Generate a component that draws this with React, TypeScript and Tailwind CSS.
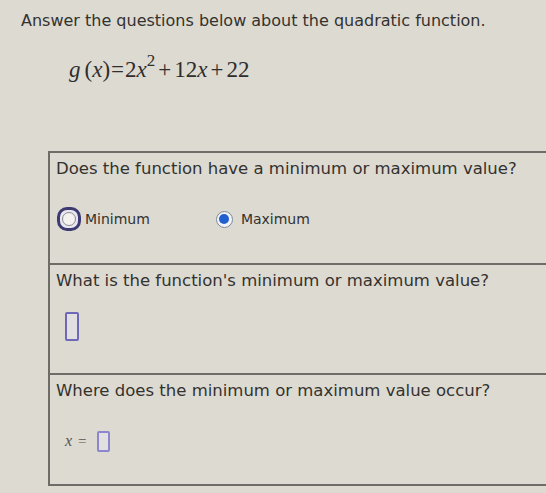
import React from "react";

const sans = { fontFamily: '"DejaVu Sans", Verdana, sans-serif' };
const serif = { fontFamily: '"Liberation Serif", "Times New Roman", serif' };

export default function App() {
  return (
    <div
      className="relative w-[546px] h-[493px] overflow-hidden bg-[#dddad2] text-[#33322f]"
      style={sans}
    >
      <div className="pl-[21px] pt-[10px] text-[16px] leading-[22px]">
        Answer the questions below about the quadratic function.
      </div>
      <div className="pl-[69px] pt-[25px] text-[23px] leading-[26px] text-[#2f2e2c]" style={serif}>
        <i>g</i>
        <span className="ml-[4px]">(</span>
        <i>x</i>
        <span>)</span>
        <span className="mx-[1px]">=</span>
        <span>2</span>
        <i>x</i>
        <span className="relative -top-[11px] text-[17px]">2</span>
        <span className="mx-[3px]">+</span>
        <span>12</span>
        <i>x</i>
        <span className="mx-[3px]">+</span>
        <span>22</span>
      </div>

      <div className="ml-[48px] mt-[66px] w-[520px] border-2 border-[#6f6c67]">
        <div className="h-[110px] pl-[6px] pt-[5px]">
          <div className="text-[16.5px] leading-[22px]">
            Does the function have a minimum or maximum value?
          </div>
          <div className="mt-[27px] flex items-center">
            <span className="ml-[1px] flex h-[24px] w-[24px] items-center justify-center rounded-[10px] border-[3px] border-[#3c3a70] bg-[#e9e6ef]">
              <span className="h-[14px] w-[14px] rounded-full border border-[#8b8a90] bg-[#f4f3f0]" />
            </span>
            <span className="ml-[4px] text-[14px]">Minimum</span>
            <span className="ml-[66px] flex h-[17px] w-[17px] items-center justify-center rounded-full border border-[#7a8aa0] bg-[#f2f2f2]">
              <span className="h-[10px] w-[10px] rounded-full bg-[#1f5fd0]" />
            </span>
            <span className="ml-[8px] text-[14px]">Maximum</span>
          </div>
        </div>
        <div className="h-[110px] border-t-2 border-[#6f6c67] pl-[6px] pt-[5px]">
          <div className="text-[16.5px] leading-[22px]">
            What is the function's minimum or maximum value?
          </div>
          <div className="ml-[9px] mt-[20px] h-[29px] w-[14px] rounded-[2px] border-2 border-[#6e68b8] bg-[#e2dfe0]" />
        </div>
        <div className="h-[111px] border-t-2 border-[#6f6c67] pl-[6px] pt-[5px]">
          <div className="text-[16.5px] leading-[22px]">
            Where does the minimum or maximum value occur?
          </div>
          <div className="ml-[9px] mt-[28px] flex h-[22px] items-center">
            <span className="text-[16px] italic text-[#555]" style={serif}>x</span>
            <span className="ml-[6px] text-[15px] text-[#555]" style={serif}>=</span>
            <span className="ml-[10px] h-[21px] w-[13px] rounded-[2px] border-2 border-[#8c86d0] bg-[#e2dfe0]" />
          </div>
        </div>
      </div>
    </div>
  );
}
